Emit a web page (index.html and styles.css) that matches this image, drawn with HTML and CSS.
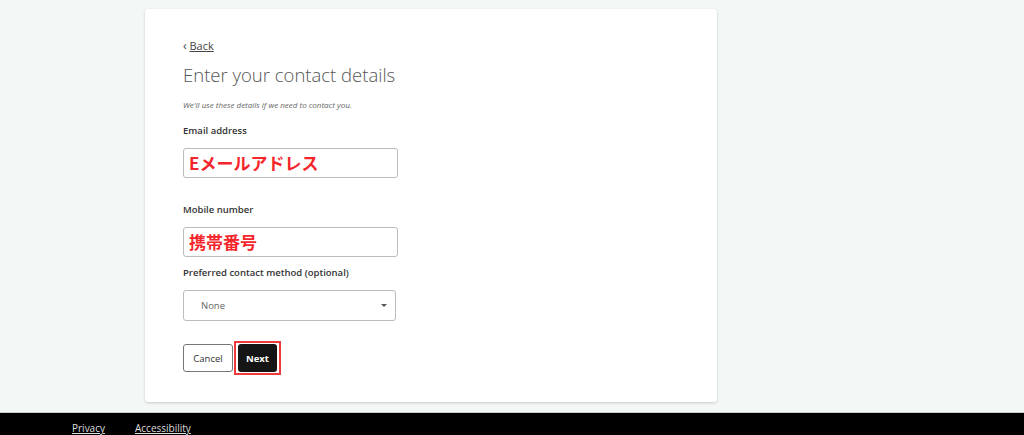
FILE: index.html
```html
<!DOCTYPE html>
<html lang="en">
<head>
    <meta charset="UTF-8">
    <meta name="viewport" content="width=device-width, initial-scale=1.0">
    <title>Enter your contact details</title>
    <link rel="stylesheet" href="styles.css">
</head>
<body>
    <div class="page">
        <!-- Contact details card -->
        <div class="card">
            <a href="#" class="back"><span class="chev">&lsaquo;</span> <u>Back</u></a>
            <h1>Enter your contact details</h1>
            <p class="hint">We'll use these details if we need to contact you.</p>

            <label class="field-label email" for="email">Email address</label>
            <div class="text-input" id="email">Eメールアドレス</div>

            <label class="field-label mobile" for="mobile">Mobile number</label>
            <div class="text-input" id="mobile">携帯番号</div>

            <label class="field-label method" for="method">Preferred contact method (optional)</label>
            <div class="select" id="method">
                <span>None</span>
                <span class="caret"></span>
            </div>

            <div class="actions">
                <button class="btn-cancel">Cancel</button>
                <span class="highlight"><button class="btn-next">Next</button></span>
            </div>
        </div>
    </div>

    <footer class="footer">
        <a href="#">Privacy</a>
        <a href="#">Accessibility</a>
    </footer>
</body>
</html>
```

FILE: styles.css
```css
body {
    margin: 0;
    font-family: "Open Sans", "Noto Sans", Arial, sans-serif;
    background-color: #f3f7f6;
    color: #333;
}

.page {
    padding: 9px 0 0 145px;
    height: 402px;
    box-sizing: border-box;
}

.card {
    width: 572px;
    height: 393px;
    box-sizing: border-box;
    padding: 29px 38px 0;
    background-color: #fff;
    border-radius: 3px;
    box-shadow: 0 1px 3px rgba(0, 0, 0, 0.18);
}

.back {
    display: block;
    font-size: 11px;
    line-height: 16px;
    color: #444;
    text-decoration: none;
}

.back .chev {
    font-size: 12px;
}

h1 {
    margin: 7px 0 0;
    font-size: 18.5px;
    line-height: 28px;
    font-weight: 300;
    color: #555;
}

.hint {
    margin: 10px 0 0;
    font-size: 8px;
    line-height: 12px;
    font-style: italic;
    color: #666;
}

.field-label {
    display: block;
    margin-top: 11px;
    font-size: 9.5px;
    line-height: 14px;
    font-weight: 600;
    color: #333;
}

.field-label.email {
    margin-top: 13px;
}

.field-label.mobile {
    margin-top: 25px;
}

.field-label.method {
    margin-top: 9px;
}

.text-input {
    box-sizing: border-box;
    width: 215px;
    height: 30px;
    margin-top: 10px;
    padding: 0 5px;
    border: 1px solid #bbb;
    border-radius: 3px;
    font-family: "Noto Sans CJK JP", sans-serif;
    font-weight: 700;
    font-size: 17px;
    line-height: 28px;
    color: #f5262b;
}

.select {
    box-sizing: border-box;
    width: 213px;
    height: 31px;
    margin-top: 10px;
    padding: 0 8px 0 17px;
    border: 1px solid #bbb;
    border-radius: 3px;
    display: flex;
    align-items: center;
    justify-content: space-between;
    font-size: 9.5px;
    color: #666;
}

.caret {
    width: 0;
    height: 0;
    border-left: 3px solid transparent;
    border-right: 3px solid transparent;
    border-top: 3px solid #555;
}

.actions {
    display: flex;
    align-items: center;
    gap: 1px;
    margin-top: 20px;
}

button {
    height: 28px;
    font-family: inherit;
    font-size: 9.5px;
    border-radius: 3px;
    cursor: pointer;
}

.btn-cancel {
    width: 50px;
    padding: 0;
    border: 1px solid #777;
    background-color: #fff;
    color: #333;
}

.highlight {
    display: inline-flex;
    padding: 1px 2px;
    border: 2px solid #ee3a3a;
}

.btn-next {
    width: 39px;
    padding: 0;
    border: none;
    background-color: #151515;
    color: #fff;
    font-weight: 700;
}

.footer {
    height: 22px;
    margin-top: 10px;
    border-top: 1px solid #ccc;
    background-color: #000;
    padding-left: 72px;
    display: flex;
    gap: 30px;
    align-items: flex-end;
}

.footer a {
    font-size: 10px;
    line-height: 13px;
    color: #ddd;
}
```
